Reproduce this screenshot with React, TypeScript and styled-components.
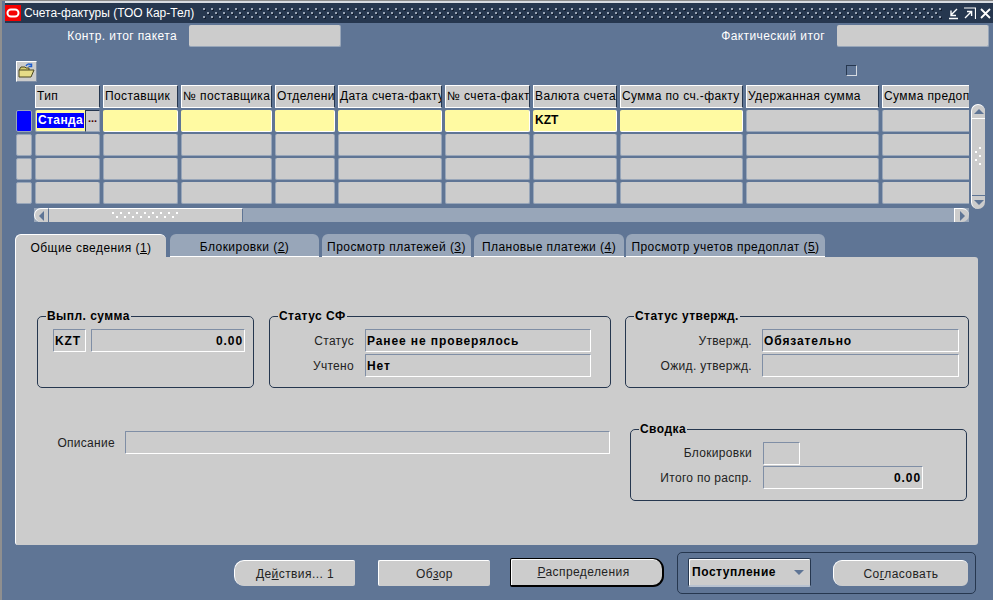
import React from "react";
import styled, { createGlobalStyle, css } from "styled-components";

const Global = createGlobalStyle`
  html, body { margin: 0; padding: 0; background: #5f7595; }
  body { font-family: "Liberation Sans", Arial, sans-serif; font-size: 12px; color: #000; }
  * { box-sizing: border-box; }
`;

const Win = styled.div`
  width: 993px;
  height: 600px;
  background: #5f7595;
  border-top: 1px solid #8a8a8a;
  border-left: 2px solid #8f8f8f;
  overflow: hidden;
`;

const TitleBar = styled.div`
  height: 22px;
  margin-left: 3px;
  display: flex;
  align-items: center;
  background: #26374f;
  color: #fff;
  border-top: 2px solid #d8dce2;
`;

const TitleText = styled.span`
  margin-left: 3px;
  font-size: 12px;
  white-space: nowrap;
`;

const Dots = styled.div`
  flex: 1;
  height: 12px;
  margin: 0 4px 0 9px;
  background-image:
    radial-gradient(circle at 1px 1px, #9aa5b6 0.8px, transparent 1px),
    radial-gradient(circle at 1px 1px, #9aa5b6 0.8px, transparent 1px),
    radial-gradient(circle at 1px 1px, #131e30 0.8px, transparent 1px),
    radial-gradient(circle at 1px 1px, #131e30 0.8px, transparent 1px);
  background-size: 8px 8px;
  background-position: 0 1px, 4px 5px, 1px 2px, 5px 6px;
`;

const WinButtons = styled.div`
  display: flex;
  gap: 4px;
  padding-right: 2px;
`;

const TopRow = styled.div`
  display: flex;
  justify-content: space-between;
  height: 22px;
  margin-top: 2px;
  padding: 0 4px 0 0;
`;

const TopGroup = styled.div`
  display: flex;
  align-items: center;
  gap: 12px;
`;

const Label = styled.span<{ $w?: number }>`
  color: #fff;
  font-size: 12px;
  white-space: nowrap;
  text-align: right;
  letter-spacing: 0.4px;
  ${(p) => p.$w && css`width: ${p.$w}px;`}
`;

const TopField = styled.div`
  width: 152px;
  height: 22px;
  background: #cccccc;
  border-radius: 2px;
  border-right: 1px solid #98a6b9;
  border-bottom: 1px solid #98a6b9;
`;

const ToolRow = styled.div`
  display: flex;
  align-items: center;
  justify-content: space-between;
  height: 22px;
  margin-top: 13px;
  padding: 0 136px 0 14px;
`;

const IconButton = styled.button`
  width: 21px;
  height: 21px;
  padding: 0;
  display: flex;
  align-items: center;
  justify-content: center;
  background: #cccccc;
  border: 0;
  border-top: 1px solid #fff;
  border-left: 1px solid #fff;
  border-bottom: 1px solid #7f8ea5;
  border-right: 1px solid #7f8ea5;
`;

const CheckBox = styled.div`
  width: 11px;
  height: 11px;
  margin-bottom: 2px;
  border-top: 1px solid #26374f;
  border-left: 1px solid #26374f;
  border-right: 1px solid #d6dbe2;
  border-bottom: 1px solid #d6dbe2;
`;

const TableArea = styled.div`
  position: relative;
  margin-top: 3px;
  margin-left: 14px;
  width: 970px;
  height: 123px;
`;

const Grid = styled.div`
  display: grid;
  grid-template-columns: 16px 65px 75px 91px 60px 104px 85px 84px 123px 133px 90px;
  column-gap: 3px;
  width: 953px;
  overflow: hidden;
`;

const HeadCell = styled.div`
  height: 23px;
  margin-bottom: 2px;
  padding-left: 1px;
  line-height: 21px;
  font-size: 12px;
  white-space: nowrap;
  overflow: hidden;
  background: #cccccc;
  border-top: 1px solid #fff;
  border-left: 1px solid #fff;
  border-bottom: 1px solid #fff;
  border-right: 1px solid #26374f;
  letter-spacing: 0.4px;
`;

const HeadBlank = styled.div`
  height: 23px;
  margin-bottom: 2px;
`;

const Cell = styled.div<{ $yellow?: boolean }>`
  height: 22px;
  margin-bottom: 2px;
  padding-left: 1px;
  line-height: 21px;
  font-weight: bold;
  font-size: 12px;
  border-radius: 2px;
  background: ${(p) => (p.$yellow ? "#fffaa2" : "#cccccc")};
  border-right: 1px solid ${(p) => (p.$yellow ? "#fff" : "#98a6b9")};
  border-bottom: 1px solid ${(p) => (p.$yellow ? "#fff" : "#98a6b9")};
  border-left: 1px solid ${(p) => (p.$yellow ? "#fffaa2" : "#98a6b9")};
`;

const Marker = styled.div<{ $active?: boolean }>`
  height: 22px;
  margin-bottom: 2px;
  border-radius: 2px;
  background: ${(p) => (p.$active ? "#0000ff" : "#cccccc")};
  border: 1px solid #98a6b9;
`;

const TypeCell = styled(Cell)`
  display: flex;
  padding: 0;
  background: #fffaa2;
  position: relative;
`;

const Selected = styled.span`
  display: block;
  height: 15px;
  margin: 3px 0 0 1px;
  padding: 0 1px;
  background: #0000ff;
  color: #fff;
  line-height: 15px;
  font-size: 12px;
  letter-spacing: 0.4px;
`;

const Lov = styled.span`
  position: absolute;
  right: -1px;
  top: 0;
  width: 15px;
  height: 22px;
  background: #cccccc;
  border: 1px solid #98a6b9;
  border-top-color: #26374f;
  border-left-color: #26374f;
  color: #400;
  font-size: 11px;
  line-height: 15px;
  text-align: center;
`;

const VScroll = styled.div`
  position: absolute;
  left: 955px;
  top: 19px;
  width: 14px;
  height: 105px;
  display: flex;
  flex-direction: column;
  align-items: center;
  background: #cccccc;
  border-radius: 7px;
  border-left: 1px solid #fff;
  border-top: 1px solid #fff;
`;

const VEnd = styled.div<{ $bottom?: boolean }>`
  width: 100%;
  height: 14px;
  display: flex;
  align-items: center;
  justify-content: center;
  ${(p) =>
    p.$bottom
      ? css`margin-top: auto; border-top: 1px solid #5f7595;`
      : css`border-bottom: 1px solid #fff;`}
`;

const Grip = styled.div`
  width: 8px;
  height: 20px;
  margin-top: 28px;
  background-image:
    radial-gradient(circle at 1px 1px, #fff 0.8px, transparent 1px),
    radial-gradient(circle at 1px 1px, #fff 0.8px, transparent 1px);
  background-size: 8px 8px;
  background-position: 0 4px, 4px 0;
`;

const HScroll = styled.div`
  display: flex;
  margin-left: 32px;
  width: 935px;
  height: 14px;
  background: #98a6b9;
`;

const HEnd = styled.div<{ $right?: boolean }>`
  width: 15px;
  height: 14px;
  display: flex;
  align-items: center;
  justify-content: center;
  background: #cccccc;
  border-top: 1px solid #fff;
  border-left: 1px solid #fff;
  ${(p) =>
    p.$right
      ? css`margin-left: auto; border-radius: 0 7px 7px 0;`
      : css`border-radius: 7px 0 0 7px; border-right: 1px solid #5f7595;`}
`;

const HThumb = styled.div`
  width: 194px;
  height: 14px;
  background-color: #cccccc;
  border-top: 1px solid #fff;
  border-right: 1px solid #5f7595;
  display: flex;
  align-items: center;
  justify-content: center;
`;

const HGrip = styled.div`
  width: 68px;
  height: 8px;
  background-image:
    radial-gradient(circle at 1px 1px, #fff 0.8px, transparent 1px),
    radial-gradient(circle at 1px 1px, #fff 0.8px, transparent 1px);
  background-size: 8px 8px;
  background-position: 0 0, 4px 4px;
`;

const Tabs = styled.div`
  display: flex;
  height: 23px;
  margin-top: 12px;
  margin-left: 13px;
`;

const Tab = styled.div<{ $active?: boolean; $w: number; $gap: number }>`
  width: ${(p) => p.$w}px;
  margin-right: ${(p) => p.$gap}px;
  height: 23px;
  text-align: center;
  line-height: 27px;
  font-size: 12px;
  white-space: nowrap;
  letter-spacing: 0.45px;
  border-radius: 6px 6px 0 0;
  background: ${(p) => (p.$active ? "#cccccc" : "#98a6b9")};
  ${(p) =>
    p.$active
      ? css`border-top: 1px solid #fff; border-left: 1px solid #fff;`
      : css`border-bottom: 1px solid #fff;`}
`;

const Panel = styled.div`
  margin-left: 13px;
  width: 963px;
  height: 288px;
  background: #cccccc;
  border-left: 1px solid #fff;
  border-radius: 0 3px 3px 3px;
  display: flex;
  flex-direction: column;
`;

const PanelRow = styled.div`
  display: flex;
  margin-top: 59px;
  padding-left: 21px;
`;

const LowerRow = styled.div`
  display: flex;
  justify-content: space-between;
  margin-top: 41px;
  padding: 0 11px 0 0;
`;

const Group = styled.div<{ $w: number; $h: number; $mr?: number }>`
  position: relative;
  width: ${(p) => p.$w}px;
  height: ${(p) => p.$h}px;
  margin-right: ${(p) => p.$mr ?? 0}px;
  border: 1px solid #26374f;
  border-radius: 5px;
`;

const Legend = styled.span`
  position: absolute;
  top: -8px;
  left: 8px;
  padding: 0 1px;
  background: #cccccc;
  font-weight: bold;
  font-size: 12px;
  letter-spacing: 0.45px;
  line-height: 15px;
  white-space: nowrap;
`;

const Field = styled.div<{ $w: number; $right?: boolean; $ml?: number }>`
  width: ${(p) => p.$w}px;
  height: 23px;
  margin-left: ${(p) => p.$ml ?? 0}px;
  padding: 0 1px;
  line-height: 22px;
  font-weight: bold;
  font-size: 12px;
  letter-spacing: 0.9px;
  white-space: nowrap;
  text-align: ${(p) => (p.$right ? "right" : "left")};
  background: #cccccc;
  border-top: 1px solid #7f8ea5;
  border-left: 1px solid #7f8ea5;
  border-right: 1px solid #fff;
  border-bottom: 1px solid #fff;
  border-radius: 1px;
`;

const FormRow = styled.div<{ $h?: number }>`
  display: flex;
  align-items: center;
  gap: 9px;
  height: ${(p) => p.$h ?? 25}px;
`;

const GroupBody = styled.div<{ $pt: number; $pl: number }>`
  padding: ${(p) => p.$pt}px 0 0 ${(p) => p.$pl}px;
`;

const DarkLabel = styled.span<{ $w: number }>`
  width: ${(p) => p.$w}px;
  text-align: right;
  font-size: 12px;
  color: #222;
  white-space: nowrap;
  letter-spacing: 0.3px;
`;

const DescRow = styled.div`
  display: flex;
  align-items: center;
  gap: 10px;
  margin-top: 2px;
  height: 23px;
`;

const Footer = styled.div`
  display: flex;
  align-items: center;
  height: 41px;
  margin-top: 7px;
  padding-left: 232px;
`;

const ActionButton = styled.div<{ $w: number; $mr: number; $shape?: "left" | "none" | "both"; $focus?: boolean }>`
  width: ${(p) => p.$w}px;
  height: 26px;
  margin-right: ${(p) => p.$mr}px;
  text-align: center;
  line-height: 27px;
  font-size: 12px;
  letter-spacing: 0.42px;
  color: #222;
  background: #cccccc;
  border-top: 1px solid #fff;
  border-left: 1px solid #fff;
  border-radius: ${(p) =>
    p.$shape === "left" ? "10px 2px 2px 10px" : p.$shape === "both" ? "9px 6px 6px 9px" : "2px"};
  ${(p) =>
    p.$focus &&
    css`
      height: 29px;
      padding-right: 6px;
      border: 1px solid #000;
      border-bottom-width: 2px;
      border-right-width: 2px;
      border-radius: 2px 11px 11px 2px;
      box-shadow: inset 1px 1px 0 #fff;
    `}
`;

const FooterBox = styled.div`
  display: flex;
  align-items: center;
  width: 299px;
  height: 42px;
  padding-left: 10px;
  border: 1px solid #26374f;
  border-radius: 5px;
`;

const Select = styled.div`
  display: flex;
  align-items: center;
  justify-content: space-between;
  width: 123px;
  height: 29px;
  margin-right: 22px;
  padding: 0 6px 0 3px;
  font-weight: bold;
  font-size: 12px;
  letter-spacing: 0.55px;
  background: #cccccc;
  border: 1px solid #26374f;
  border-bottom: 2px solid #b8c2d0;
  box-shadow: inset 1px 1px 0 #fff;
  border-radius: 2px;
`;

const Arrow = styled.svg`
  display: block;
`;

const Logo = styled.svg`
  flex: none;
`;

const U = styled.span`
  text-decoration: underline;
`;

const columns = [
  "Тип",
  "Поставщик",
  "№ поставщика",
  "Отделени",
  "Дата счета-факту",
  "№ счета-факт",
  "Валюта счета",
  "Сумма по сч.-факту",
  "Удержанная сумма",
  "Сумма предоп",
];

const OracleIcon = () => (
  <Logo width="16" height="16" viewBox="0 0 16 16">
    <rect width="16" height="16" fill="#f40000" />
    <rect x="2.5" y="4.5" width="11" height="7" rx="3.5" fill="none" stroke="#fff" strokeWidth="2" />
  </Logo>
);

const Minimize = () => (
  <svg width="12" height="13" viewBox="0 0 12 13">
    <path d="M2 11.5h9M10 2L4 8M4 3.5V8.5H9" fill="none" stroke="#fff" strokeWidth="1.4" />
  </svg>
);

const Restore = () => (
  <svg width="13" height="13" viewBox="0 0 13 13">
    <path d="M1 1h11.5v11" fill="none" stroke="#fff" strokeWidth="1.2" />
    <path d="M2 11l6-6M4 4.5h4.6V9" fill="none" stroke="#fff" strokeWidth="1.4" />
  </svg>
);

const Close = () => (
  <svg width="11" height="13" viewBox="0 0 11 13">
    <path d="M1 2l9 9M10 2l-9 9" fill="none" stroke="#fff" strokeWidth="1.8" />
  </svg>
);

const FolderIcon = () => (
  <svg width="17" height="16" viewBox="0 0 17 16">
    <path d="M1 7l2-3h4l1 1h3v2" fill="#d8cd70" stroke="#4a4620" strokeWidth="1" />
    <path d="M1 14V7h15l-3 7z" fill="#e6dc88" stroke="#4a4620" strokeWidth="1" />
    <path d="M8 3c1-2 3-2.5 5-1.5M13.500 .5v3h-3" fill="none" stroke="#1f5fd0" strokeWidth="1.5" />
  </svg>
);

const ArrowGlyph = ({ dir, color = "#5f7595" }: { dir: "up" | "down" | "left" | "right"; color?: string }) => {
  const pts = {
    up: "0,5 5,0 10,5",
    down: "0,0 10,0 5,5",
    left: "5,0 5,10 0,5",
    right: "0,0 0,10 5,5",
  }[dir];
  const wide = dir === "up" || dir === "down";
  return (
    <Arrow width={wide ? 10 : 5} height={wide ? 5 : 10} viewBox={wide ? "0 0 10 5" : "0 0 5 10"}>
      <polygon points={pts} fill={color} />
    </Arrow>
  );
};

export default function App() {
  const yellowCols = [1, 2, 3, 4, 5, 6, 7];
  return (
    <Win>
      <Global />
      <TitleBar>
        <OracleIcon />
        <TitleText>Счета-фактуры (ТОО Кар-Тел)</TitleText>
        <Dots />
        <WinButtons>
          <Minimize />
          <Restore />
          <Close />
        </WinButtons>
      </TitleBar>

      <TopRow>
        <TopGroup>
          <Label $w={175}>Контр. итог пакета</Label>
          <TopField />
        </TopGroup>
        <TopGroup>
          <Label>Фактический итог</Label>
          <TopField />
        </TopGroup>
      </TopRow>

      <ToolRow>
        <IconButton>
          <FolderIcon />
        </IconButton>
        <CheckBox />
      </ToolRow>

      <TableArea>
        <Grid>
          <HeadBlank />
          {columns.map((c) => (
            <HeadCell key={c}>{c}</HeadCell>
          ))}

          <Marker $active />
          <TypeCell>
            <Selected>Станда</Selected>
            <Lov>...</Lov>
          </TypeCell>
          {yellowCols.map((c) => (
            <Cell key={c} $yellow>
              {c === 6 ? "KZT" : ""}
            </Cell>
          ))}
          <Cell />
          <Cell />

          {[0, 1, 2].map((r) => (
            <React.Fragment key={r}>
              <Marker />
              {columns.map((c) => (
                <Cell key={c} />
              ))}
            </React.Fragment>
          ))}
        </Grid>
        <VScroll>
          <VEnd>
            <ArrowGlyph dir="up" />
          </VEnd>
          <Grip />
          <VEnd $bottom>
            <ArrowGlyph dir="down" />
          </VEnd>
        </VScroll>
      </TableArea>
      <HScroll>
        <HEnd>
          <ArrowGlyph dir="left" />
        </HEnd>
        <HThumb>
          <HGrip />
        </HThumb>
        <HEnd $right>
          <ArrowGlyph dir="right" />
        </HEnd>
      </HScroll>

      <Tabs>
        <Tab $active $w={151} $gap={4}>
          Общие сведения (<U>1</U>)
        </Tab>
        <Tab $w={149} $gap={3}>
          Блокировки (<U>2</U>)
        </Tab>
        <Tab $w={149} $gap={3}>
          Просмотр платежей (<U>3</U>)
        </Tab>
        <Tab $w={150} $gap={2}>
          Плановые платежи (<U>4</U>)
        </Tab>
        <Tab $w={199} $gap={0}>
          Просмотр учетов предоплат (<U>5</U>)
        </Tab>
      </Tabs>

      <Panel>
        <PanelRow>
          <Group $w={217} $h={72} $mr={15}>
            <Legend>Выпл. сумма</Legend>
            <GroupBody $pt={11} $pl={15}>
              <FormRow>
                <Field $w={33}>KZT</Field>
                <Field $w={154} $right $ml={-4}>
                  0.00
                </Field>
              </FormRow>
            </GroupBody>
          </Group>
          <Group $w={342} $h={72} $mr={14}>
            <Legend>Статус СФ</Legend>
            <GroupBody $pt={11} $pl={0}>
              <FormRow>
                <DarkLabel $w={84}>Статус</DarkLabel>
                <Field $w={226} $ml={2}>Ранее не проверялось</Field>
              </FormRow>
              <FormRow>
                <DarkLabel $w={84}>Учтено</DarkLabel>
                <Field $w={226} $ml={2}>Нет</Field>
              </FormRow>
            </GroupBody>
          </Group>
          <Group $w={344} $h={72}>
            <Legend>Статус утвержд.</Legend>
            <GroupBody $pt={11} $pl={0}>
              <FormRow>
                <DarkLabel $w={126}>Утвержд.</DarkLabel>
                <Field $w={197} $ml={1}>Обязательно</Field>
              </FormRow>
              <FormRow>
                <DarkLabel $w={126}>Ожид. утвержд.</DarkLabel>
                <Field $w={197} $ml={1} />
              </FormRow>
            </GroupBody>
          </Group>
        </PanelRow>
        <LowerRow>
          <DescRow>
            <DarkLabel $w={99}>Описание</DarkLabel>
            <Field $w={485} />
          </DescRow>
          <Group $w={337} $h={72}>
            <Legend>Сводка</Legend>
            <GroupBody $pt={11} $pl={0}>
              <FormRow $h={24}>
                <DarkLabel $w={121}>Блокировки</DarkLabel>
                <Field $w={37} $ml={2} />
              </FormRow>
              <FormRow>
                <DarkLabel $w={121}>Итого по распр.</DarkLabel>
                <Field $w={160} $right $ml={2}>0.00</Field>
              </FormRow>
            </GroupBody>
          </Group>
        </LowerRow>
      </Panel>

      <Footer>
        <ActionButton $w={121} $mr={23} $shape="left">
          Де<U>й</U>ствия... 1
        </ActionButton>
        <ActionButton $w={112} $mr={20}>
          Об<U>з</U>ор
        </ActionButton>
        <ActionButton $w={154} $mr={13} $focus>
          <U>Р</U>аспределения
        </ActionButton>
        <FooterBox>
          <Select>
            Поступление
            <ArrowGlyph dir="down" />
          </Select>
          <ActionButton $w={135} $mr={0} $shape="both">
            Со<U>г</U>ласовать
          </ActionButton>
        </FooterBox>
      </Footer>
    </Win>
  );
}
